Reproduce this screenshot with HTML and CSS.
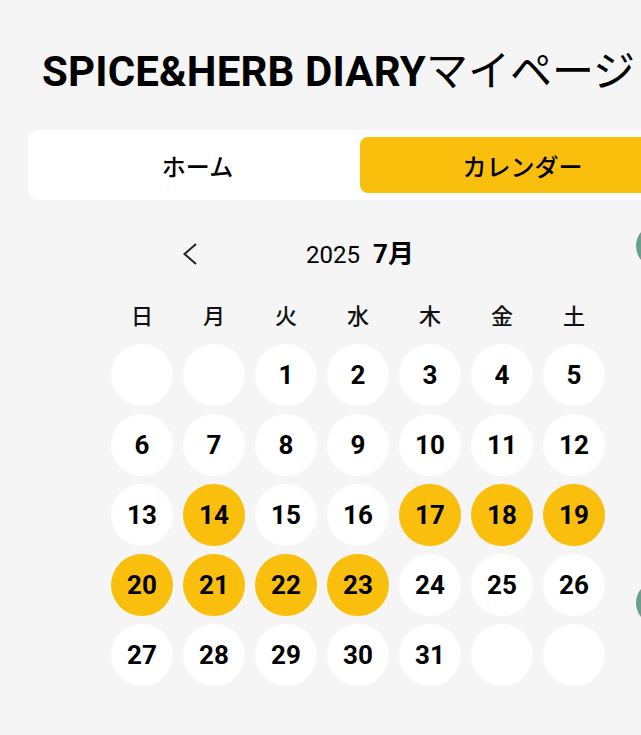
FILE: index.html
```html
<!DOCTYPE html>
<html lang="ja">

<head>
    <meta charset="UTF-8">
    <meta name="viewport" content="width=device-width, initial-scale=1.0">
    <title>SPICE&amp;HERB DIARY マイページ</title>
    <link rel="stylesheet" href="styles.css">
</head>

<body>
    <div class="page">
        <h1 class="page-title">SPICE&amp;HERB DIARY<span class="jp">マイページ</span></h1>

        <div class="tabs">
            <button class="tab">ホーム</button>
            <button class="tab active">カレンダー</button>
        </div>

        <div class="main">
            <div class="calendar-panel">
                <div class="calendar">
                    <div class="month-nav">
                        <button class="nav-btn" aria-label="前の月">
                            <svg width="16" height="22" viewBox="0 0 16 22">
                                <polyline points="14,1 2.5,11 14,21" fill="none" stroke="#222" stroke-width="2" />
                            </svg>
                        </button>
                        <div class="month-title">
                            <span class="year">2025</span>
                            <span class="month">7月</span>
                        </div>
                        <button class="nav-btn hidden" aria-label="次の月"></button>
                    </div>

                    <div class="weekdays">
                        <span>日</span>
                        <span>月</span>
                        <span>火</span>
                        <span>水</span>
                        <span>木</span>
                        <span>金</span>
                        <span>土</span>
                    </div>

                    <div class="days">
                        <div class="day"></div>
                        <div class="day"></div>
                        <div class="day">1</div>
                        <div class="day">2</div>
                        <div class="day">3</div>
                        <div class="day">4</div>
                        <div class="day">5</div>

                        <div class="day">6</div>
                        <div class="day">7</div>
                        <div class="day">8</div>
                        <div class="day">9</div>
                        <div class="day">10</div>
                        <div class="day">11</div>
                        <div class="day">12</div>

                        <div class="day">13</div>
                        <div class="day marked">14</div>
                        <div class="day">15</div>
                        <div class="day">16</div>
                        <div class="day marked">17</div>
                        <div class="day marked">18</div>
                        <div class="day marked">19</div>

                        <div class="day marked">20</div>
                        <div class="day marked">21</div>
                        <div class="day marked">22</div>
                        <div class="day marked">23</div>
                        <div class="day">24</div>
                        <div class="day">25</div>
                        <div class="day">26</div>

                        <div class="day">27</div>
                        <div class="day">28</div>
                        <div class="day">29</div>
                        <div class="day">30</div>
                        <div class="day">31</div>
                        <div class="day"></div>
                        <div class="day"></div>
                    </div>
                </div>
            </div>

            <div class="side-list">
                <div class="entry"><div class="avatar"></div></div>
                <div class="entry"><div class="avatar"></div></div>
            </div>
        </div>
    </div>
</body>

</html>
```

FILE: styles.css
```css
body {
    margin: 0;
    padding: 0;
    background-color: #f5f5f5;
    font-family: Roboto, "Noto Sans CJK JP", sans-serif;
    color: #000;
    overflow-x: hidden;
}

.page {
    width: 664px;
    margin-left: 28px;
    padding-top: 48px;
}

.page-title {
    margin: 0 0 34px 0;
    padding-left: 14px;
    font-size: 42px;
    line-height: 48px;
    font-weight: 700;
    letter-spacing: 0.15px;
    white-space: nowrap;
}

.page-title .jp {
    font-weight: 400;
    letter-spacing: 0;
}

/* タブ */
.tabs {
    display: flex;
    background-color: #ffffff;
    border-radius: 10px;
    padding: 7px;
    box-sizing: border-box;
    height: 70px;
}

.tab {
    flex: 1;
    border: none;
    background: none;
    border-radius: 8px;
    font-family: inherit;
    font-size: 24px;
    font-weight: 500;
    color: #000;
    cursor: pointer;
}

.tab.active {
    background-color: #f9bf0c;
}

.main {
    display: flex;
}

.calendar-panel {
    flex: 0 0 608px;
    box-sizing: border-box;
    padding-left: 83px;
}

/* カレンダー */
.calendar {
    width: 494px;
}

.month-nav {
    display: flex;
    align-items: center;
    justify-content: space-between;
    width: 356px;
    height: 40px;
    margin: 34px 0 0 71px;
}

.nav-btn {
    width: 20px;
    height: 40px;
    padding: 0;
    border: none;
    background: none;
    display: flex;
    align-items: center;
    cursor: pointer;
}

.nav-btn.hidden {
    visibility: hidden;
}

.month-title {
    display: flex;
    align-items: baseline;
    gap: 13px;
    margin-top: -6px;
}

.year {
    font-size: 24px;
}

.month {
    font-size: 26px;
    font-weight: 700;
}

.weekdays {
    display: grid;
    grid-template-columns: repeat(7, 62px);
    column-gap: 10px;
    margin-top: 29px;
    font-size: 22px;
    font-weight: 500;
    line-height: 28px;
    text-align: center;
    color: #111;
}

.days {
    display: grid;
    grid-template-columns: repeat(7, 62px);
    grid-auto-rows: 62px;
    column-gap: 10px;
    row-gap: 8px;
    margin-top: 13px;
}

.day {
    border-radius: 50%;
    background-color: #ffffff;
    display: flex;
    align-items: center;
    justify-content: center;
    font-size: 26px;
    font-weight: 700;
}

.day.marked {
    background-color: #f9bf0c;
}

/* 右側の一覧（画面外にはみ出している） */
.side-list {
    padding-top: 24px;
    display: flex;
    flex-direction: column;
}

.entry {
    height: 357px;
}

.avatar {
    width: 44px;
    height: 44px;
    border-radius: 50%;
    background-color: #6b9e8c;
}
```
